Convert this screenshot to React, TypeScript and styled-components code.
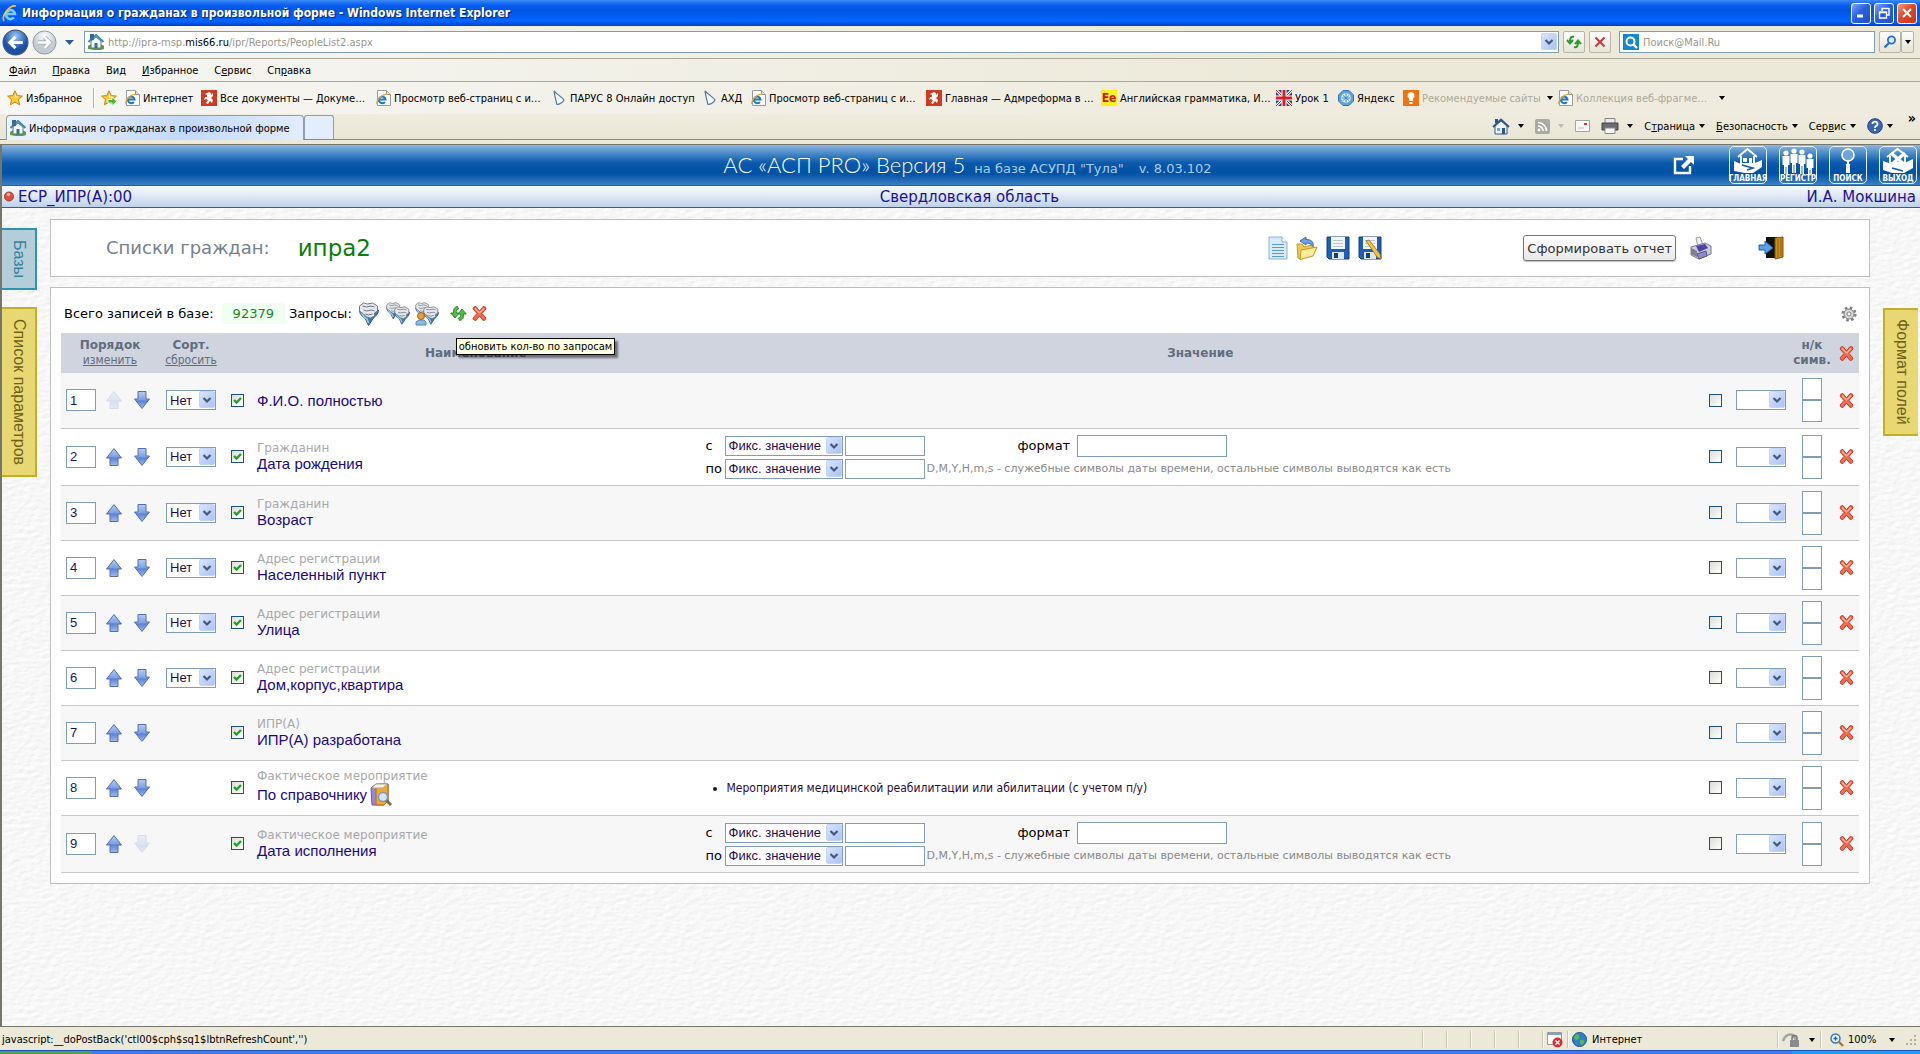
import React from "react";
import styled, { createGlobalStyle, css } from "styled-components";

const ui = `"DejaVu Sans Condensed", "DejaVu Sans", sans-serif`;
const wide = `"DejaVu Sans", sans-serif`;
const arial = `"Liberation Sans", sans-serif`;

const svgUrl = (s: string) => `url("data:image/svg+xml,${encodeURIComponent(s)}")`;

const paper = svgUrl(
  `<svg xmlns="http://www.w3.org/2000/svg" width="240" height="240"><filter id="p" x="0" y="0" width="100%" height="100%"><feTurbulence type="fractalNoise" baseFrequency="0.13 0.26" numOctaves="3" stitchTiles="stitch" seed="4"/><feDiffuseLighting surfaceScale="0.4" lighting-color="#f7f7f7" diffuseConstant="1.16"><feDistantLight azimuth="230" elevation="60"/></feDiffuseLighting></filter><rect width="240" height="240" filter="url(#p)"/></svg>`
);
const dropArrow = svgUrl(
  `<svg xmlns="http://www.w3.org/2000/svg" width="16" height="18"><defs><linearGradient id="g" x2="1" y2="1"><stop offset="0" stop-color="#dbe6fd"/><stop offset="1" stop-color="#a9c1f3"/></linearGradient></defs><rect x=".5" y=".5" width="15" height="16" rx="1.5" fill="url(#g)" stroke="#c3d3fb"/><path d="M4.5 7 8 10.5 11.5 7" fill="none" stroke="#44597d" stroke-width="2.2"/></svg>`
);
const tick = svgUrl(
  `<svg xmlns="http://www.w3.org/2000/svg" width="11" height="11"><path d="M2 5 4.5 7.5 9 3" fill="none" stroke="#21a121" stroke-width="2.4"/></svg>`
);

const Global = createGlobalStyle`
  *, *::before, *::after { box-sizing: border-box; }
  body { margin: 0; background: #ece9d8; font-family: ${ui}; font-size: 11px; color: #000; }
  a { color: inherit; text-decoration: none; }
  button, input, select { font: inherit; color: inherit; margin: 0; }
  button { padding: 0; border: 0; background: none; cursor: pointer; }
`;

const Window = styled.div`
  min-height: 100vh;
  display: flex;
  flex-direction: column;
`;

/* ---------- browser chrome ---------- */

const TitleBar = styled.div`
  height: 26px;
  display: flex;
  align-items: center;
  gap: 4px;
  padding: 0 3px 0 2px;
  background: linear-gradient(#3b8cf5 0, #0a5ff0 5px, #0054e3 10px, #0466ff 21px, #0140c8 100%);
  color: #fff;
  text-shadow: 1px 1px 1px #0a1f77;
`;
const TitleText = styled.div`
  flex: 1;
  white-space: nowrap;
  font: bold 12px/18px ${ui};
`;
const WinButton = styled.button<{ $close?: boolean }>`
  width: 20px;
  height: 21px;
  margin-left: 3px;
  border: 1px solid #fff;
  border-radius: 3px;
  background: ${(p) =>
    p.$close ? "linear-gradient(135deg,#f0a080,#e0482a 45%,#c8371a)" : "linear-gradient(135deg,#7fa6f5,#2a5fe0 45%,#2150cf)"};
  display: grid;
  place-items: center;
`;
const WinButtons = styled.div`
  display: flex;
`;

const NavRow = styled.div`
  height: 33px;
  display: flex;
  align-items: center;
  padding: 0 6px 0 2px;
  gap: 4px;
  background: linear-gradient(90deg, #f6f6f4, #ece9d8 70%);
  border-bottom: 1px solid #aca899;
`;
const NavButtons = styled.div`
  width: 78px;
  display: flex;
  align-items: center;
  gap: 8px;
`;
const Field = styled.div<{ $w?: number }>`
  ${(p) => (p.$w ? `width: ${p.$w}px; margin-left: 4px;` : "flex: 1;")}
  height: 22px;
  display: flex;
  align-items: center;
  gap: 4px;
  padding: 0 1px 0 3px;
  border: 1px solid #7f9db9;
  background: #fff;
  color: #9a968c;
`;
const Url = styled.div`
  flex: 1;
  white-space: nowrap;
  b {
    font-weight: normal;
    color: #000;
  }
`;
const SearchInput = styled.input`
  flex: 1;
  min-width: 0;
  border: 0;
  padding: 0;
  outline: none;
  background: transparent;
  &::placeholder {
    color: #9a968c;
    opacity: 1;
  }
`;
const ToolButton = styled.button<{ $w: number }>`
  width: ${(p) => p.$w}px;
  height: 22px;
  border: 1px solid #b8b4a6;
  border-radius: 2px;
  background: linear-gradient(#fdfdfc, #e6e3d6);
  display: grid;
  place-items: center;
`;
const Joined = styled.div`
  display: flex;
`;
const Drop = styled.button`
  width: 16px;
  height: 18px;
  background: ${dropArrow} center / 16px 18px no-repeat;
`;

const MenuRow = styled.nav`
  height: 23px;
  display: flex;
  align-items: center;
  gap: 16px;
  padding: 1px 9px 0;
  background: linear-gradient(90deg, #f6f6f4, #ece9d8 70%);
  border-bottom: 1px solid #aca899;
`;
const LinksRow = styled.div`
  height: 32px;
  display: flex;
  align-items: center;
  padding-left: 7px;
  white-space: nowrap;
  background: linear-gradient(100deg, #f6f6f4, #efecdf 60%);
`;
const LinkItem = styled.a<{ $w: number; $dim?: boolean }>`
  width: ${(p) => p.$w}px;
  flex: none;
  display: flex;
  align-items: center;
  gap: 3px;
  ${(p) => p.$dim && "color: #aca899; padding-right: 8px;"}
  svg {
    flex: none;
  }
`;
const Rule = styled.i`
  width: 2px;
  height: 20px;
  margin-right: 6px;
  border-left: 1px solid #b9b5a4;
  border-right: 1px solid #fff;
`;

const TabRow = styled.div`
  height: 26px;
  display: flex;
  align-items: flex-end;
  padding-left: 6px;
  background: linear-gradient(#efecdf, #e9e6d6);
  border-bottom: 1px solid #8c8a80;
`;
const Tab = styled.div`
  width: 298px;
  height: 25px;
  margin-bottom: -1px;
  display: flex;
  align-items: center;
  gap: 3px;
  padding-left: 3px;
  border: 1px solid #8f9db0;
  border-bottom: 0;
  border-radius: 4px 4px 0 0;
  background: linear-gradient(100deg, #eef4fd, #c3d9f8 60%, #e3edfc);
`;
const NewTab = styled.button`
  width: 30px;
  height: 24px;
  border: 1px solid #8f9db0;
  border-bottom: 0;
  border-radius: 3px 3px 0 0;
  background: #e4edfa;
`;
const CommandBar = styled.div`
  flex: 1;
  display: flex;
  justify-content: flex-end;
  align-items: center;
  height: 26px;
  padding-right: 4px;
  gap: 11px;
`;
const Command = styled.button<{ $wide?: boolean }>`
  display: flex;
  align-items: center;
  gap: ${(p) => (p.$wide ? 8 : 4)}px;
  white-space: nowrap;
`;
const More = styled.button`
  align-self: flex-start;
  font: bold 14px/10px ${ui};
  margin-left: 4px;
`;
const Caret = styled.i<{ $dim?: boolean }>`
  border: 3px solid transparent;
  border-top: 4px solid ${(p) => (p.$dim ? "#bbb" : "#000")};
  border-bottom: 0;
`;

/* ---------- page ---------- */

const Page = styled.div`
  flex: 1;
  display: flex;
  flex-direction: column;
  margin-top: 4px;
  border: solid #77766c;
  border-width: 1px 0 1px 2px;
  background: #f5f5f5 ${paper};
  font-family: ${wide};
`;
const Banner = styled.header`
  height: 40px;
  display: grid;
  grid-template-columns: 1fr auto 1fr;
  align-items: center;
  padding: 0 3px 0 16px;
  background: linear-gradient(#8db6de 0, #4587c6 9px, #0a59ad 18px, #0050a4 28px, #1c66b5 34px, #3c80c4 100%);
  color: #fff;
`;
const Brand = styled.h1`
  grid-column: 2;
  margin: 0;
  display: flex;
  align-items: baseline;
  gap: 9px;
  font: 300 22px/26px Lato, sans-serif;
  white-space: nowrap;
`;
const BrandNote = styled.span<{ $gap?: boolean }>`
  font: 13px ${wide};
  color: #a9cdf0;
  ${(p) => p.$gap && "margin-left: 6px;"}
`;
const BannerNav = styled.nav`
  display: flex;
  justify-content: flex-end;
  align-items: center;
  gap: 12px;
`;
const Popout = styled.a`
  margin-right: 22px;
  display: flex;
`;
const NavTile = styled.a`
  width: 38px;
  height: 38px;
  display: flex;
  flex-direction: column;
  align-items: center;
  border: 1px solid #e4f0fb;
  border-radius: 5px;
  font: bold 8px/9px ${ui};
  white-space: nowrap;
`;
const UserBar = styled.div`
  height: 23px;
  display: flex;
  align-items: center;
  justify-content: space-between;
  padding: 0 4px 0 2px;
  border: solid #2d6099;
  border-width: 1px 0;
  background: linear-gradient(#f6faff, #e3ebf5 40%, #c0d2e8);
  color: #1d1296;
  font-size: 15px;
`;
const Status = styled.div`
  display: flex;
  align-items: center;
  gap: 4px;
`;
const Body = styled.div`
  flex: 1;
  display: grid;
  grid-template-columns: 48px minmax(0, 1fr) 50px;
  padding-top: 11px;
`;
const Gutter = styled.div<{ $right?: boolean }>`
  display: flex;
  flex-direction: column;
  gap: 17px;
  align-items: ${(p) => (p.$right ? "flex-end" : "flex-start")};
  padding: ${(p) => (p.$right ? "89px 2px 0 0" : "9px 0 0")};
`;
const SideTab = styled.button<{ $tone: "blue" | "gold"; $right?: boolean }>`
  writing-mode: vertical-rl;
  width: 35px;
  padding: ${(p) => (p.$right ? 9 : 10)}px 0;
  text-align: center;
  font: 16px/20px ${arial};
  border: 2px solid;
  ${(p) => (p.$right ? "border-right: 0;" : "border-left: 0;")}
  ${(p) =>
    p.$tone === "blue"
      ? css`
          background: #b4ced9;
          border-color: #2f93b5;
          color: #3a82a0;
        `
      : css`
          background: #e7d873;
          border-color: #c4ae25;
          color: #6e621b;
        `}
`;
const Main = styled.main`
  display: flex;
  flex-direction: column;
  gap: 10px;
`;
const Panel = styled.section`
  border: 1px solid #bfbfbf;
  background: #fff;
`;
const TopPanel = styled(Panel)`
  height: 58px;
  display: flex;
  align-items: center;
  padding: 0 85px 0 55px;
`;
const PanelLabel = styled.h2`
  margin: 0 28px 0 0;
  font: 18px/24px ${wide};
  color: #76818e;
`;
const ListName = styled.strong`
  flex: 1;
  font: 23px/28px ${wide};
  color: #0b7d0b;
`;
const IconSet = styled.div<{ $gap: number }>`
  display: flex;
  align-items: center;
  gap: ${(p) => p.$gap}px;
`;
const IconButton = styled.button`
  display: inline-flex;
  position: relative;
`;
const ReportButton = styled.button`
  height: 26px;
  margin: 0 13px 0 141px;
  padding: 0 3px;
  border: 1px solid #777;
  border-radius: 3px;
  background: linear-gradient(#fff, #e8e8e8);
  box-shadow: 0 1px 1px #bbb;
  font: 13px ${wide};
  color: #333;
  white-space: nowrap;
`;
const Exit = styled(IconButton)`
  margin-left: 45px;
`;
const ListPanel = styled(Panel)`
  padding: 0 10px 10px;
`;
const Tools = styled.div`
  height: 45px;
  display: flex;
  align-items: center;
  padding: 6px 2px 0 3px;
  font-size: 13px;
  white-space: nowrap;
`;
const Count = styled.output`
  margin: 0 4px 0 8px;
  padding: 3px 11px;
  background: #effff0;
  color: #128a22;
`;
const Push = styled.div`
  flex: 1;
`;
const Icons = styled(IconSet)<{ $before: number }>`
  margin-left: ${(p) => p.$before}px;
`;
const Tip = styled.span`
  position: absolute;
  left: 6px;
  top: 33px;
  z-index: 1;
  padding: 0 2px;
  border: 1px solid #000;
  background: #ffffe1;
  box-shadow: 3px 3px 2px #0007;
  font: 11px/15px ${ui};
  color: #000;
`;

const Grid = styled.table`
  width: 100%;
  table-layout: fixed;
  border-collapse: collapse;
`;
const Head = styled.th`
  height: 40px;
  padding: 0;
  background: #cfd4df;
  color: #606d7e;
  font: bold 12px/15px ${wide};
  a {
    display: block;
    font: 12px/15px ${ui};
    text-decoration: underline;
  }
  svg {
    display: block;
    margin: auto;
  }
`;
const Row = styled.tr<{ $tall?: boolean }>`
  height: ${(p) => (p.$tall ? 57 : 55)}px;
  border-bottom: 1px solid #c9c9c9;
  &:nth-child(odd) {
    background: #f7f7f7;
  }
`;
const Cell = styled.td<{ $center?: boolean; $pad?: number }>`
  padding: 0 0 0 ${(p) => p.$pad || 0}px;
  ${(p) => p.$center && "text-align: center;"}
  > button, > input, > select {
    vertical-align: middle;
  }
`;
const TextBox = styled.input<{ $w: number; $h: number }>`
  width: ${(p) => p.$w}px;
  height: ${(p) => p.$h}px;
  padding: 0 3px;
  border: 1px solid #7f9db9;
  background: #fff;
  font: 13px ${arial};
  color: #1a1070;
`;
const DropDown = styled.select<{ $w: number }>`
  appearance: none;
  width: ${(p) => p.$w}px;
  height: 20px;
  padding: 0 3px;
  border: 1px solid #7f9db9;
  border-radius: 0;
  background: #fff ${dropArrow} right center / 16px 18px no-repeat;
  font: 13px ${arial};
  color: #2a0b4a;
`;
const Check = styled.input`
  appearance: none;
  width: 13px;
  height: 13px;
  border: 1px solid #1c5180;
  background: linear-gradient(135deg, #dcdcd7, #fff);
  &:checked {
    background: ${tick}, linear-gradient(135deg, #dcdcd7, #fff);
  }
`;
const Order = styled.div`
  display: flex;
  align-items: center;
  gap: 8px;
`;
const Stack = styled.div`
  display: flex;
  flex-direction: column;
  align-items: center;
`;
const Group = styled.div`
  font: 12px/14px ${wide};
  color: #a9a9a9;
`;
const Name = styled.a`
  display: flex;
  align-items: center;
  gap: 2px;
  font: 15px/17px ${arial};
  color: #1b0a80;
`;
const Range = styled.div`
  display: grid;
  grid-template-columns: 17px 118px 80px auto 1fr;
  gap: 2px;
  align-items: center;
  font-size: 13px;
`;
const RangeLabel = styled.label`
  margin-right: -2px;
  white-space: nowrap;
`;
const Format = styled.label`
  display: flex;
  align-items: center;
  gap: 7px;
  padding-left: 91px;
`;
const Hint = styled.span`
  font-size: 11px;
  line-height: 14px;
  color: #8a8a8a;
  white-space: nowrap;
`;
const Bullets = styled.ul`
  margin: 0;
  padding-left: 21px;
  font: 12px/16px ${ui};
  color: #2a0b3a;
`;

/* ---------- status and task bars ---------- */

const StatusBar = styled.footer`
  height: 23px;
  display: flex;
  align-items: center;
  padding: 2px 2px 0;
  background: #ece9d8;
`;
const StatusText = styled.div`
  flex: 1;
`;
const Pane = styled.div<{ $w: number; $gap?: number; $in?: number }>`
  width: ${(p) => p.$w}px;
  height: 17px;
  display: flex;
  align-items: center;
  gap: ${(p) => p.$gap || 5}px;
  padding: 0 ${(p) => p.$in || 4}px;
  border-left: 1px solid #c9c5b2;
  box-shadow: inset 1px 0 #fff;
`;
const TaskBar = styled.div`
  height: 4px;
  display: flex;
  background: #3a7be8;
  border-top: 1px solid #1f4fb8;
`;
const Start = styled.div`
  width: 92px;
  background: #4f9f55;
`;
const Tray = styled.div`
  width: 128px;
  margin-left: auto;
  background: #17a0ee;
`;

/* ---------- icons ---------- */

const IePage = () => (
  <svg width="15" height="16" viewBox="0 0 15 16">
    <path d="M1.5 .5h9l4 4v11h-13z" fill="#fff" stroke="#9a9a9a" />
    <path d="M10.5 .5v4h4" fill="#ddd" stroke="#9a9a9a" />
    <path d="M3 9.500h6.500A3.300 3.300 0 1 0 8.800 12" fill="none" stroke="#1f77c9" strokeWidth="2" />
    <path d="M1 14C-.5 11 6 3.500 10.500 4.500" fill="none" stroke="#e6a61c" strokeWidth="1.200" />
  </svg>
);
const IeLogo = () => (
  <svg width="16" height="18" viewBox="0 0 16 18">
    <path d="M4 10h9A4.500 4.500 0 1 0 12 13.500" fill="none" stroke="#7cc9f8" strokeWidth="2.600" />
    <path d="M2 17C-1 12 7 1 14 2" fill="none" stroke="#f3c53a" strokeWidth="1.600" />
  </svg>
);
const SiteHouse = () => (
  <svg width="16" height="16" viewBox="0 0 16 16">
    <path d="M0 12c3-3 12-3 16 0v3c-5 2-12 1-16 0z" fill="#5f9a41" />
    <path d="M3 7v7h10V7L8 3z" fill="#f2f7fb" stroke="#56798f" />
    <path d="M.5 8 8 1l7.500 7" fill="none" stroke="#4a88ad" strokeWidth="2" />
    <path d="M2 0h4v6H2z" fill="#2f6f98" />
    <path d="M6.500 9h3v5h-3z" fill="#3d6d86" />
  </svg>
);
const star = "M8 .8l2.200 4.800 5.200.5-3.900 3.500 1.100 5.200L8 12.100l-4.600 2.700 1.100-5.200L.6 6.100l5.200-.5z";
const Star = ({ add }: { add?: boolean }) => (
  <svg width="16" height="16" viewBox="0 0 16 16">
    <path d={star} fill="#fbc93c" stroke="#c78411" />
    <path d="M8 3l1.300 3.500 3 .3L8 8z" fill="#fff3b0" />
    {add && <path d="M7 9.500h4V7l5 4.300-5 4.200V13H7z" fill="#4bb53a" stroke="#fff" strokeWidth=".8" />}
  </svg>
);
const Crest = () => (
  <svg width="16" height="16" viewBox="0 0 16 16">
    <path d="M0 0h16v16H0z" fill="#cf3b22" />
    <path d="M8 2l2 1v2l2-2v3l-2 2 2 2-1 3-2-2-2 3-2-1 2-3-2-1-2 1 1-3 2 0 0-2-2-1z" fill="#fff" />
  </svg>
);
const Blade = () => (
  <svg width="16" height="16" viewBox="0 0 16 16">
    <path d="M3 .8c1 2 9 7 10 9.200-1 2-4 4.500-7 4.500C5 11 4 8 3 .8z" fill="#f3f8fc" stroke="#54779a" strokeWidth="1.200" />
  </svg>
);
const Ee = styled.span`
  width: 16px;
  flex: none;
  background: #ffef1f;
  color: #c81a0c;
  font: bold 12px/16px ${ui};
  text-align: center;
`;
const Flag = () => (
  <svg width="16" height="16" viewBox="0 0 16 16">
    <path d="M0 0h16v16H0z" fill="#26408f" />
    <path d="M0 0l16 16M16 0 0 16" stroke="#fff" strokeWidth="3" />
    <path d="M0 0l16 16M16 0 0 16" stroke="#d22" strokeWidth="1" />
    <path d="M8 0v16M0 8h16" stroke="#fff" strokeWidth="5" />
    <path d="M8 0v16M0 8h16" stroke="#d22030" strokeWidth="3" />
  </svg>
);
const Yandex = () => (
  <svg width="16" height="16" viewBox="0 0 16 16">
    <path d="M5 .5h6L15.500 5v6L11 15.500H5L.5 11V5z" fill="#5fa3dd" stroke="#2d74b5" />
    <circle cx="8" cy="8" r="4.800" fill="#d6ebfb" />
    <path d="M4 8h8M8 3.500v9M5 5.500l6 5M11 5.500l-6 5" stroke="#3d86c6" strokeWidth=".9" />
  </svg>
);
const Bulb = () => (
  <svg width="16" height="16" viewBox="0 0 16 16">
    <path d="M0 0h16v16H0z" fill="#f0720c" />
    <path d="M8 2a3.600 3.600 0 0 1 2 6.500V11H6V8.500A3.600 3.600 0 0 1 8 2zM6.500 12h3v2h-3z" fill="#fff" />
  </svg>
);
const Orb = ({ forward }: { forward?: boolean }) => (
  <svg width={forward ? 25 : 27} height={forward ? 25 : 27} viewBox="0 0 26 26">
    <defs>
      <radialGradient id={forward ? "of" : "ob"} cy=".25">
        <stop offset="0" stopColor={forward ? "#fff" : "#9cc8f5"} />
        <stop offset="1" stopColor={forward ? "#c3cad3" : "#1b4fa8"} />
      </radialGradient>
    </defs>
    <circle cx="13" cy="13" r="12" fill={`url(#${forward ? "of" : "ob"})`} stroke={forward ? "#8f9aa8" : "#3c557c"} />
    <path
      d={forward ? "M6 13h12M13 7.500 18.500 13 13 18.500" : "M20 13H8M13 7.500 7.500 13 13 18.500"}
      fill="none"
      stroke={forward ? "#a9b2bd" : "#fff"}
      strokeWidth={forward ? 4.5 : 3}
    />
    {forward && <path d="M6 13h12M13 7.500 18.500 13 13 18.500" fill="none" stroke="#fff" strokeWidth="2.600" />}
  </svg>
);
const Cross = () => (
  <svg width="15" height="15" viewBox="0 0 15 15">
    <path d="M2 1l2-.5L7.500 5 11 .5l2.500.5.5 2-4 4.500 4 4.500-1 2-2 .5-3.500-4.500L4 14.500l-2-.5-1-2 4-4.500L1 3z" fill="#f2694d" stroke="#bf3620" strokeWidth=".9" />
    <path d="M3 2.500 7.500 7 12 2.500" fill="none" stroke="#fbb4a0" strokeWidth="1.200" />
  </svg>
);
const Arrow = ({ down, off }: { down?: boolean; off?: boolean }) => (
  <svg width="20" height="20" viewBox="0 0 20 20" opacity={off ? 0.2 : 1}>
    <defs>
      <linearGradient id="arr" x2="0" y2="1">
        <stop offset="0" stopColor="#b4ccf4" />
        <stop offset=".5" stopColor="#7d9fe4" />
        <stop offset=".55" stopColor="#5c80d4" />
        <stop offset="1" stopColor="#9fbcf2" />
      </linearGradient>
    </defs>
    <path
      d={down ? "M6 1.500h8V9h3.500L10 18.500 2.500 9H6z" : "M6 18.500h8V11h3.500L10 1.500 2.500 11H6z"}
      fill="url(#arr)"
      stroke="#566fa8"
      strokeLinejoin="round"
    />
  </svg>
);
const Funnel = ({ kind }: { kind: 1 | 2 | 3 }) => {
  const one = (
    <g>
      <path d="M1 8c0 5 4 7 6 9l3 6.500 4-6c2-3 6-5 6-9.500z" fill="#3b78b5" stroke="#275682" />
      <path d="M2.500 10l3 5 3 2 1.500 4" fill="none" stroke="#a8d3f0" strokeWidth="1.500" />
      <path d="M1 4l4-3 4 1 5-1 5 3v5l-3 2v3l-4 2-4-1-3-3-4-3z" fill="#e6e9ec" stroke="#6f7881" />
      <path d="M4 4l4 1 4-1 4 1M5 8l3 1 5-1 3 1M7 12l3 1 4-1" fill="none" stroke="#6d757e" />
    </g>
  );
  return (
    <svg width="24" height="24" viewBox="0 0 24 24">
      {kind === 1 ? (
        <g transform="translate(1.500)">{one}</g>
      ) : (
        <>
          <g transform="scale(.72)">{one}</g>
          <g transform="translate(8 4) scale(.78)">{one}</g>
        </>
      )}
      {kind === 3 && (
        <>
          <circle cx="6" cy="14" r="3.500" fill="#e79c3c" stroke="#a9641c" />
          <path d="M1 23v-3l3-2h5l2 2v3z" fill="#8ebbe4" stroke="#5b87b2" />
        </>
      )}
    </svg>
  );
};
const Refresh = () => (
  <svg width="17" height="17" viewBox="0 0 17 17">
    <path d="M7.500 1.500C4 2 3 5 3.500 8H.8L5 13l4-5H6.500C6 6 6.500 4.500 8.500 4z" fill="#4fbf46" stroke="#1f7f22" strokeWidth=".9" />
    <path d="M9.500 15.500c3.500-.5 4.500-3.500 4-6.500h2.700L12 4 8 9h2.500c.5 2 0 3.500-2 4z" fill="#4fbf46" stroke="#1f7f22" strokeWidth=".9" />
  </svg>
);
const Gear = () => (
  <svg width="16" height="16" viewBox="0 0 16 16">
    <circle cx="8" cy="8" r="6.300" fill="none" stroke="#808080" strokeWidth="2.600" strokeDasharray="2.500 2.450" />
    <circle cx="8" cy="8" r="5" fill="#d8d8d8" stroke="#808080" />
    <circle cx="8" cy="8" r="2" fill="#fff" stroke="#808080" />
  </svg>
);
const Sheet = () => (
  <svg width="20" height="24" viewBox="0 0 20 24">
    <path d="M1 1h13l5 5v17H1z" fill="#d8ebfa" stroke="#8fb3d4" />
    <path d="M14 1v5h5" fill="#fff" stroke="#8fb3d4" />
    <path d="M4 8.500h12M4 11.500h12M4 14.500h12M4 17.500h12M4 20.500h12" stroke="#5b98d0" />
  </svg>
);
const Folder = () => (
  <svg width="22" height="24" viewBox="0 0 22 24">
    <path d="M1 8h5l2 3 8-2 2 3-1 6-12 5-3-1z" fill="#e9cc52" stroke="#b99a22" />
    <path d="M5 14l16-3-4 9-13 3.500z" fill="#fbec98" stroke="#b99a22" />
    <path d="M4 5l6-4v2.500c5 0 8 2 7 7-2-3-4-3.500-7-3.500V9z" fill="#6fa2e4" stroke="#3b68b0" />
  </svg>
);
const Disk = ({ edit }: { edit?: boolean }) => (
  <svg width="24" height="24" viewBox="0 0 24 24">
    <path d="M1 1h22v22H3l-2-2z" fill="#1d5fb8" stroke="#123f80" />
    <path d="M5 1h14v12H5z" fill="#f3f5f8" />
    <path d="M7 4.500h10M7 7.500h10M7 10.500h10" stroke="#bfc6cf" />
    <path d="M6 16h12v7H6z" fill="#dfe5ec" />
    <path d="M8 17h4v5H8z" fill="#123f80" />
    {edit && <path d="M8 5l3-1 11 14 1 5-4-2z" fill="#f2c33c" stroke="#94701a" strokeWidth=".8" />}
  </svg>
);
const Printer = () => (
  <svg width="24" height="24" viewBox="0 0 24 24">
    <path d="M7 2l4-1 3 8-5 2z" fill="#eef0f6" stroke="#9a9dae" />
    <path d="M2 11l14-4 6 3v8l-12 5-8-4z" fill="#c9cbd8" stroke="#77798a" />
    <path d="M7 10l9-2 3 4-9 4z" fill="#4c42a8" />
    <path d="M8 18l9-3 1 5-8 3z" fill="#8d88cf" stroke="#55528f" />
    <path d="M2 12v6l6 3v-6z" fill="#7d7f90" />
  </svg>
);
const Door = () => (
  <svg width="26" height="24" viewBox="0 0 26 24">
    <path d="M8 1h11v21H8z" fill="#111" />
    <path d="M17 2l8-1v20l-8 2z" fill="#c98d1c" stroke="#7b510b" />
    <path d="M20 3v18M23 2v18" stroke="#8f6212" />
    <path d="M1 9h6V5l8 7-8 6v-4H1z" fill="#55a1ee" stroke="#2763ab" />
  </svg>
);
const Book = () => (
  <svg width="24" height="24" viewBox="0 0 24 24">
    <path d="M2 5l5-4h12v17l-4 4H3z" fill="#9d84dd" stroke="#6a54a8" />
    <path d="M7 5l4-4h8v17l-4 4H7z" fill="#f3a630" stroke="#b26f10" />
    <path d="M3 5l4-4h11l-4 4z" fill="#f5f1e4" stroke="#b9a67c" />
    <circle cx="14" cy="14" r="4.500" fill="#cfe6f8" stroke="#7c98b3" strokeWidth="1.500" />
    <path d="M17.500 17.500 22 22" stroke="#7a6b4d" strokeWidth="3" />
  </svg>
);
const External = () => (
  <svg width="22" height="20" viewBox="0 0 22 20">
    <path d="M10 4H2v14h15v-7" fill="none" stroke="#fff" strokeWidth="2.400" />
    <path d="M12 1h9v9l-3-3-7 7-3-3 7-7z" fill="#fff" />
  </svg>
);
const tiles: Record<string, React.ReactNode> = {
  ГЛАВНАЯ: (
    <>
      <path d="M3 14l7 3 9 1 12-5v7l-9 6h-8L3 24z" fill="#fff" />
      <path d="M10 9v8h13V9M7 10l9.500-8L26 10" fill="none" stroke="#fff" strokeWidth="1.800" />
      <path d="M12 11h4v4h-4zM18 11h3v6h-3z" fill="#fff" />
      <path d="M11 18l11 3-6 2" fill="none" stroke="#0a59ad" strokeWidth="1.500" />
    </>
  ),
  РЕГИСТР: (
    <g fill="#fff">
      {[5, 13, 21, 29].map((x, i) => (
        <g key={x} transform={`translate(${x} ${[4, 2, 3, 7][i]})`}>
          <circle cy="2" r="2.600" />
          <path d="M-3.500 5h7v9h-1.500v10H.4v-8h-.8v8h-1.600V14h-1.500z" />
        </g>
      ))}
    </g>
  ),
  ПОИСК: (
    <>
      <circle cx="17" cy="8" r="6" fill="#6fa5d8" stroke="#fff" strokeWidth="1.600" />
      <path d="M17 14v5" stroke="#fff" strokeWidth="2" />
      <path d="M17 17v9" stroke="#fff" strokeWidth="4" />
    </>
  ),
  ВЫХОД: (
    <>
      <path d="M2 14l9 3h10l11-5v9l-9 5H11l-9-3z" fill="#fff" />
      <path d="M9 9v7h15V9M6 10l10.500-8L27 10" fill="none" stroke="#fff" strokeWidth="1.800" />
      <path d="M10 6l14 12M24 6 10 18" stroke="#fff" strokeWidth="3.500" />
      <path d="M11 21l11 3" stroke="#0a59ad" strokeWidth="1.500" />
    </>
  ),
};

/* ---------- data ---------- */

const docs = "Все документы — Докуме…";
const web = "Просмотр веб-страниц с и…";
const links: { w: number; icon: React.ReactNode; text: string; dim?: boolean }[] = [
  { w: 76, icon: <IePage />, text: "Интернет" },
  { w: 175, icon: <Crest />, text: docs },
  { w: 175, icon: <IePage />, text: web },
  { w: 151, icon: <Blade />, text: "ПАРУС 8 Онлайн доступ" },
  { w: 49, icon: <Blade />, text: "АХД" },
  { w: 175, icon: <IePage />, text: web },
  { w: 175, icon: <Crest />, text: "Главная — Адмреформа в …" },
  { w: 175, icon: <Ee>Ee</Ee>, text: "Английская грамматика, И…" },
  { w: 62, icon: <Flag />, text: "Урок 1" },
  { w: 65, icon: <Yandex />, text: "Яндекс" },
  { w: 155, icon: <Bulb />, text: "Рекомендуемые сайты", dim: true },
  { w: 175, icon: <IePage />, text: "Коллекция веб-фрагме…", dim: true },
];

type Item = { name: string; group?: string; sort?: boolean; kind?: "date" | "book" };
const items: Item[] = [
  { name: "Ф.И.О. полностью", sort: true },
  { name: "Дата рождения", group: "Гражданин", sort: true, kind: "date" },
  { name: "Возраст", group: "Гражданин", sort: true },
  { name: "Населенный пункт", group: "Адрес регистрации", sort: true },
  { name: "Улица", group: "Адрес регистрации", sort: true },
  { name: "Дом,корпус,квартира", group: "Адрес регистрации", sort: true },
  { name: "ИПР(А) разработана", group: "ИПР(А)" },
  { name: "По справочнику", group: "Фактическое мероприятие", kind: "book" },
  { name: "Дата исполнения", group: "Фактическое мероприятие", kind: "date" },
];

const Bound = ({ id, text }: { id: string; text: string }) => (
  <>
    <RangeLabel htmlFor={id}>{text}</RangeLabel>
    <DropDown id={id} $w={118}>
      <option>Фикс. значение</option>
    </DropDown>
    <TextBox $w={80} $h={20} aria-label={`Значение ${text}`} />
  </>
);

const DateRange = ({ id }: { id: string }) => (
  <Range>
    <Bound id={`${id}-from`} text="с" />
    <Format>
      формат
      <TextBox $w={150} $h={22} />
    </Format>
    <span />
    <Bound id={`${id}-to`} text="по" />
    <Hint>D,M,Y,H,m,s - служебные символы даты времени, остальные символы выводятся как есть</Hint>
  </Range>
);

const ItemRow = ({ item, index }: { item: Item; index: number }) => (
  <Row $tall={item.kind === "date"}>
    <Cell $pad={5}>
      <Order>
        <TextBox $w={30} $h={22} defaultValue={index + 1} aria-label="Порядок" />
        <IconButton aria-label="Выше">
          <Arrow off={index === 0} />
        </IconButton>
        <IconButton aria-label="Ниже">
          <Arrow down off={index === items.length - 1} />
        </IconButton>
      </Order>
    </Cell>
    <Cell $center>
      {item.sort && (
        <DropDown $w={50} aria-label="Сортировка">
          <option>Нет</option>
        </DropDown>
      )}
    </Cell>
    <Cell $center>
      <Check type="checkbox" defaultChecked aria-label={item.name} />
    </Cell>
    <Cell $pad={6}>
      {item.group && <Group>{item.group}</Group>}
      <Name href="#">
        {item.name}
        {item.kind === "book" && <Book />}
      </Name>
    </Cell>
    <Cell $pad={5}>
      {item.kind === "date" && <DateRange id={`r${index}`} />}
      {item.kind === "book" && (
        <Bullets>
          <li>Мероприятия медицинской реабилитации или абилитации (с учетом п/у)</li>
        </Bullets>
      )}
    </Cell>
    <Cell $center>
      <Check type="checkbox" aria-label="Итог" />
    </Cell>
    <Cell $center>
      <DropDown $w={50} aria-label="Функция">
        <option></option>
      </DropDown>
    </Cell>
    <Cell>
      <Stack>
        <TextBox $w={20} $h={22} aria-label="Начало" />
        <TextBox $w={20} $h={22} aria-label="Конец" />
      </Stack>
    </Cell>
    <Cell $center>
      <IconButton aria-label="Удалить">
        <Cross />
      </IconButton>
    </Cell>
  </Row>
);

export default function App() {
  return (
    <Window>
      <Global />
      <TitleBar>
        <IeLogo />
        <TitleText>Информация о гражданах в произвольной форме - Windows Internet Explorer</TitleText>
        <WinButtons>
          <WinButton aria-label="Свернуть">
            <svg width="12" height="12"><path d="M2 9h6" stroke="#fff" strokeWidth="3" /></svg>
          </WinButton>
          <WinButton aria-label="Восстановить">
            <svg width="12" height="12"><path d="M4 4V1.500h7V8H8.500M1.500 5h7v6h-7zM1 5.500h8" fill="none" stroke="#fff" strokeWidth="1.400" /></svg>
          </WinButton>
          <WinButton $close aria-label="Закрыть">
            <svg width="12" height="12"><path d="M2 2l8 8M10 2l-8 8" stroke="#fff" strokeWidth="2" /></svg>
          </WinButton>
        </WinButtons>
      </TitleBar>

      <NavRow>
        <NavButtons>
          <IconSet $gap={3}>
            <IconButton aria-label="Назад"><Orb /></IconButton>
            <IconButton aria-label="Вперед"><Orb forward /></IconButton>
          </IconSet>
          <svg width="9" height="7"><path d="M0 1h9L4.500 6z" fill="#2c5f91" /></svg>
        </NavButtons>
        <Field>
          <SiteHouse />
          <Url>http://ipra-msp.<b>mis66.ru</b>/ipr/Reports/PeopleList2.aspx</Url>
          <Drop aria-label="Список адресов" />
        </Field>
        <ToolButton $w={22} aria-label="Обновить">
          <svg width="16" height="14" viewBox="0 0 16 14"><path d="M8 2C5 1 4 3 4 7M1 5l3 3.500L7 5M8 12c3 1 4-1 4-5M9 9l3-3.500L15 9" fill="none" stroke="#2f9a33" strokeWidth="2" /></svg>
        </ToolButton>
        <ToolButton $w={22} aria-label="Остановить">
          <svg width="12" height="12"><path d="M1.500 1.500l9 9M10.500 1.500l-9 9" stroke="#c33b3b" strokeWidth="2" /></svg>
        </ToolButton>
        <Field $w={256}>
          <svg width="16" height="16" viewBox="0 0 16 16"><path d="M0 0h16v16H0z" fill="#1688d2" /><circle cx="7.500" cy="7.500" r="4" fill="none" stroke="#fff" strokeWidth="2" /><path d="M10 10l4 4" stroke="#fff" strokeWidth="2.400" /></svg>
          <SearchInput placeholder="Поиск@Mail.Ru" aria-label="Поиск" />
        </Field>
        <Joined>
          <ToolButton $w={22} aria-label="Искать">
            <svg width="14" height="14"><circle cx="8.500" cy="5" r="3.600" fill="#d8ebfc" stroke="#2f6fc9" strokeWidth="1.800" /><path d="M6 8l-4.500 4.500" stroke="#2f6fc9" strokeWidth="2.400" /></svg>
          </ToolButton>
          <ToolButton $w={13} aria-label="Параметры поиска"><Caret /></ToolButton>
        </Joined>
      </NavRow>

      <MenuRow>
        <a href="#"><u>Ф</u>айл</a>
        <a href="#"><u>П</u>равка</a>
        <a href="#">Ви<u>д</u></a>
        <a href="#"><u>И</u>збранное</a>
        <a href="#">С<u>е</u>рвис</a>
        <a href="#">Сп<u>р</u>авка</a>
      </MenuRow>

      <LinksRow>
        <LinkItem href="#" $w={86}><Star />Избранное</LinkItem>
        <Rule />
        <LinkItem href="#" $w={24} aria-label="Добавить"><Star add /></LinkItem>
        {links.map((l, i) => (
          <LinkItem key={i} href="#" $w={l.w} $dim={l.dim}>
            {l.icon}
            {l.text}
            {l.dim && <Push />}
            {l.dim && <Caret />}
          </LinkItem>
        ))}
      </LinksRow>

      <TabRow>
        <Tab><SiteHouse />Информация о гражданах в произвольной форме</Tab>
        <NewTab aria-label="Новая вкладка" />
        <CommandBar>
          <Command $wide aria-label="Домой">
            <svg width="18" height="17" viewBox="0 0 18 17"><path d="M3 8v8h12V8L9 3z" fill="#eef4fc" stroke="#33548f" /><path d="M1 9l8-7.500L17 9" fill="none" stroke="#33548f" strokeWidth="1.800" /><path d="M3 1h3v4H3zM10 10h3v6h-3z" fill="#2c4fa8" /><path d="M5 10h3v3H5z" fill="#6fa3e0" /></svg>
            <Caret />
          </Command>
          <Command $wide aria-label="Каналы">
            <svg width="15" height="15" viewBox="0 0 15 15"><rect width="15" height="15" rx="2" fill="#a9a9a5" /><path d="M3 7a5 5 0 0 1 5 5M3 3.500A8.500 8.500 0 0 1 11.500 12" fill="none" stroke="#fff" strokeWidth="1.700" /><circle cx="4" cy="11" r="1.400" fill="#fff" /></svg>
            <Caret $dim />
          </Command>
          <Command aria-label="Почта">
            <svg width="15" height="12"><path d="M.5 .5h14v11H.5z" fill="#f7f7f5" stroke="#a3a3a0" /><path d="M9 3h3v2H9z" fill="#d33" /><path d="M3 8h6" stroke="#bbb" /></svg>
          </Command>
          <Command $wide aria-label="Печать">
            <svg width="18" height="16" viewBox="0 0 18 16"><path d="M4 .5h10v6H4z" fill="#e8e8e8" stroke="#888" /><path d="M1 5h16v7H1z" fill="#6b6d72" stroke="#444" /><path d="M4 10h10v5.500H4z" fill="#fff" stroke="#888" /></svg>
            <Caret />
          </Command>
          <Command><span>С<u>т</u>раница</span><Caret /></Command>
          <Command><span><u>Б</u>езопасность</span><Caret /></Command>
          <Command><span>Сер<u>в</u>ис</span><Caret /></Command>
          <Command aria-label="Справка">
            <svg width="16" height="16" viewBox="0 0 16 16"><circle cx="8" cy="8" r="7.300" fill="#3a63b8" stroke="#26427c" /><path d="M5.500 6a2.500 2.300 0 1 1 3.500 2Q8 8.500 8 10M8 11v2" fill="none" stroke="#fff" strokeWidth="1.800" /></svg>
            <Caret />
          </Command>
          <More aria-label="Еще">»</More>
        </CommandBar>
      </TabRow>

      <Page>
        <Banner>
          <Brand>
            АС «АСП PRO» Версия 5
            <BrandNote>на базе АСУПД "Тула"</BrandNote>
            <BrandNote $gap>v. 8.03.102</BrandNote>
          </Brand>
          <BannerNav>
            <Popout href="#" aria-label="Открыть в новом окне"><External /></Popout>
            {Object.keys(tiles).map((t) => (
              <NavTile key={t} href="#">
                <svg width="34" height="27" viewBox="0 0 34 27">{tiles[t]}</svg>
                {t}
              </NavTile>
            ))}
          </BannerNav>
        </Banner>
        <UserBar>
          <Status>
            <svg width="10" height="11"><circle cx="5" cy="5.500" r="4.500" fill="#d9503f" stroke="#a8382c" /><circle cx="4.500" cy="3.500" r="1.800" fill="#f3a79c" /></svg>
            ЕСР_ИПР(А):00
          </Status>
          <span>Свердловская область</span>
          <span>И.А. Мокшина</span>
        </UserBar>

        <Body>
          <Gutter>
            <SideTab $tone="blue">Базы</SideTab>
            <SideTab $tone="gold">Список параметров</SideTab>
          </Gutter>
          <Main>
            <TopPanel>
              <PanelLabel>Списки граждан:</PanelLabel>
              <ListName>ипра2</ListName>
              <IconSet $gap={8}>
                <IconButton aria-label="Новый"><Sheet /></IconButton>
                <IconButton aria-label="Открыть"><Folder /></IconButton>
                <IconButton aria-label="Сохранить"><Disk /></IconButton>
                <IconButton aria-label="Сохранить как"><Disk edit /></IconButton>
              </IconSet>
              <ReportButton>Сформировать отчет</ReportButton>
              <IconButton aria-label="Печать"><Printer /></IconButton>
              <Exit aria-label="Выход"><Door /></Exit>
            </TopPanel>

            <ListPanel>
              <Tools>
                Всего записей в базе:
                <Count>92379</Count>
                Запросы:
                <Icons $gap={5} $before={5}>
                  <IconButton aria-label="Запрос"><Funnel kind={1} /></IconButton>
                  <IconButton aria-label="Группа запросов"><Funnel kind={2} /></IconButton>
                  <IconButton aria-label="Запросы пользователя"><Funnel kind={3} /></IconButton>
                </Icons>
                <Icons $gap={5} $before={11}>
                  <IconButton>
                    <Refresh />
                    <Tip role="tooltip">обновить кол-во по запросам</Tip>
                  </IconButton>
                  <IconButton aria-label="Очистить"><Cross /></IconButton>
                </Icons>
                <Push />
                <IconButton aria-label="Настройки"><Gear /></IconButton>
              </Tools>
              <Grid>
                <colgroup>
                  <col width="98" />
                  <col width="64" />
                  <col width="28" />
                  <col width="25%" />
                  <col />
                  <col width="31" />
                  <col width="59" />
                  <col width="44" />
                  <col width="25" />
                </colgroup>
                <thead>
                  <tr>
                    <Head>Порядок<a href="#">изменить</a></Head>
                    <Head>Сорт.<a href="#">сбросить</a></Head>
                    <Head />
                    <Head>Наименование</Head>
                    <Head>Значение</Head>
                    <Head />
                    <Head />
                    <Head>н/к<br />симв.</Head>
                    <Head><Cross /></Head>
                  </tr>
                </thead>
                <tbody>
                  {items.map((item, i) => (
                    <ItemRow key={i} item={item} index={i} />
                  ))}
                </tbody>
              </Grid>
            </ListPanel>
          </Main>
          <Gutter $right>
            <SideTab $tone="gold" $right>Формат полей</SideTab>
          </Gutter>
        </Body>
      </Page>

      <StatusBar>
        <StatusText>javascript:__doPostBack('ctl00$cph$sq1$lbtnRefreshCount','')</StatusText>
        {[0, 1, 2, 3, 4].map((i) => (
          <Pane key={i} $w={24} />
        ))}
        <Pane $w={25}>
          <svg width="16" height="16"><path d="M.5 .5h14v12H.5z" fill="#fff" stroke="#999" /><path d="M1 1h13v2H1z" fill="#7aa6d8" /><circle cx="10.500" cy="10.500" r="5" fill="#d22f2f" /><path d="M8.500 8.500l4 4M12.500 8.500l-4 4" stroke="#fff" strokeWidth="1.400" /></svg>
        </Pane>
        <Pane $w={210}>
          <svg width="15" height="15" viewBox="0 0 15 15"><circle cx="7.500" cy="7.500" r="7" fill="#2f7fd0" stroke="#1e4f90" /><path d="M3 3c3-2 5 0 4 3S3 8 2 6zM8 8c3-1 5 0 4 3s-4 2-4 0z" fill="#58b948" /></svg>
          Интернет
        </Pane>
        <Pane $w={43} $gap={9}>
          <svg width="18" height="15"><path d="M1 9Q4 1 11 3l3 5" fill="none" stroke="#a3a3a3" strokeWidth="2.500" /><path d="M8 8h9v7H8z" fill="#8a8a8a" /><path d="M10 8V6a2.500 2.500 0 0 1 5 0v2" fill="none" stroke="#777" strokeWidth="1.500" /></svg>
          <Caret />
        </Pane>
        <Pane $w={84} $gap={4} $in={9}>
          <svg width="14" height="14"><circle cx="5.500" cy="5.500" r="4.500" fill="#e5f2fd" stroke="#3f78b8" strokeWidth="1.500" /><path d="M5.500 3.500v4M3.500 5.500h4" stroke="#2763ab" strokeWidth="1.400" /><path d="M9 9l4 4" stroke="#a5773f" strokeWidth="2.400" /></svg>
          100%
          <Push />
          <Caret />
        </Pane>
        <svg width="14" height="14"><g fill="#b5b19e"><path d="M10 2h2v2h-2zM10 6h2v2h-2zM10 10h2v2h-2zM6 6h2v2H6zM6 10h2v2H6zM2 10h2v2H2z" /></g></svg>
      </StatusBar>
      <TaskBar>
        <Start />
        <Tray />
      </TaskBar>
    </Window>
  );
}
